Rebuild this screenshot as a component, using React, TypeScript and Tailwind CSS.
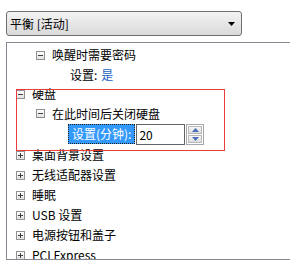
import React from "react";

type Node = {
  label: string;
  level: number;
  expanded: boolean;
};

const collapsed: Node[] = [
  { label: "桌面背景设置", level: 0, expanded: false },
  { label: "无线适配器设置", level: 0, expanded: false },
  { label: "睡眠", level: 0, expanded: false },
  { label: "USB 设置", level: 0, expanded: false },
  { label: "电源按钮和盖子", level: 0, expanded: false },
  { label: "PCI Express", level: 0, expanded: false },
];

function Toggle({ open }: { open: boolean }) {
  return (
    <div className="relative w-[9px] h-[9px] shrink-0 border border-[#919191] bg-gradient-to-b from-white to-[#e2e2e2]">
      <div className="absolute left-[1px] top-[3px] w-[5px] h-px bg-[#3f3f46]" />
      {!open && <div className="absolute left-[3px] top-[1px] w-px h-[5px] bg-[#3f3f46]" />}
    </div>
  );
}

function Row({ node, h }: { node: Node; h: string }) {
  return (
    <div className={`flex items-center ${h}`} style={{ paddingLeft: 9 + node.level * 20 }}>
      <Toggle open={node.expanded} />
      <span className="ml-[7px] text-[12px] leading-none text-black">{node.label}</span>
    </div>
  );
}

export default function App() {
  return (
    <div className="relative w-[290px] h-[264px] bg-white overflow-hidden font-['Noto_Sans_CJK_SC','Noto_Sans',sans-serif]">
      {/* power plan dropdown */}
      <div className="pt-[11px] pl-[6px]">
        <div className="flex items-center w-[236px] h-[25px] rounded-[3px] border border-[#707070] bg-gradient-to-b from-[#f3f3f3] to-[#dadada] pl-[3px] pr-[6px]">
          <span className="flex-1 text-[12px] leading-none text-black">平衡 [活动]</span>
          <svg width="7" height="4" viewBox="0 0 7 4">
            <path d="M0 0H7L3.5 4Z" fill="#000" />
          </svg>
        </div>
      </div>

      {/* settings tree */}
      <div className="mt-[6px] ml-[6px] h-[218px] border-l border-t border-b border-[#828790] overflow-hidden pt-[2px]">
        <Row node={{ label: "唤醒时需要密码", level: 1, expanded: true }} h="h-[20px]" />
        <div className="flex items-center h-[19px] pl-[63px] text-[12px] leading-none">
          <span className="text-black">设置:</span>
          <span className="ml-[4px] text-[#1a5fc4]">是</span>
        </div>
        <Row node={{ label: "硬盘", level: 0, expanded: true }} h="h-[20px]" />
        <Row node={{ label: "在此时间后关闭硬盘", level: 1, expanded: true }} h="h-[19px]" />
        <div className="flex items-start h-[22px] pl-[61px] pt-[1px]">
          <div className="flex items-center h-[20px] px-[3px] bg-[#3399ff] border border-dotted border-[#222] text-[12px] leading-none text-white">
            设置(分钟):
          </div>
          <div className="flex items-center w-[49px] h-[21px] ml-[1px] border border-[#646464] bg-white pl-[2px] text-[12px] leading-none text-black">
            20
          </div>
          <div className="flex flex-col gap-[1px] w-[18px] h-[21px] ml-[1px] border border-[#a8a8a8] p-[1px]">
            <div className="flex-1 flex items-center justify-center border border-[#b8b8b8] bg-gradient-to-b from-[#f7f7f7] to-[#dedede]">
              <svg width="7" height="4" viewBox="0 0 7 4">
                <path d="M0 4H7L3.5 0Z" fill="#4a6fb8" />
              </svg>
            </div>
            <div className="flex-1 flex items-center justify-center border border-[#b8b8b8] bg-gradient-to-b from-[#f7f7f7] to-[#dedede]">
              <svg width="7" height="4" viewBox="0 0 7 4">
                <path d="M0 0H7L3.5 4Z" fill="#4a6fb8" />
              </svg>
            </div>
          </div>
        </div>
        {collapsed.map((n) => (
          <Row key={n.label} node={n} h="h-[20px]" />
        ))}
      </div>

      {/* annotation */}
      <div className="absolute left-[16px] top-[89px] w-[209px] h-[62px] border border-[#ee3b3b] pointer-events-none" />
    </div>
  );
}
